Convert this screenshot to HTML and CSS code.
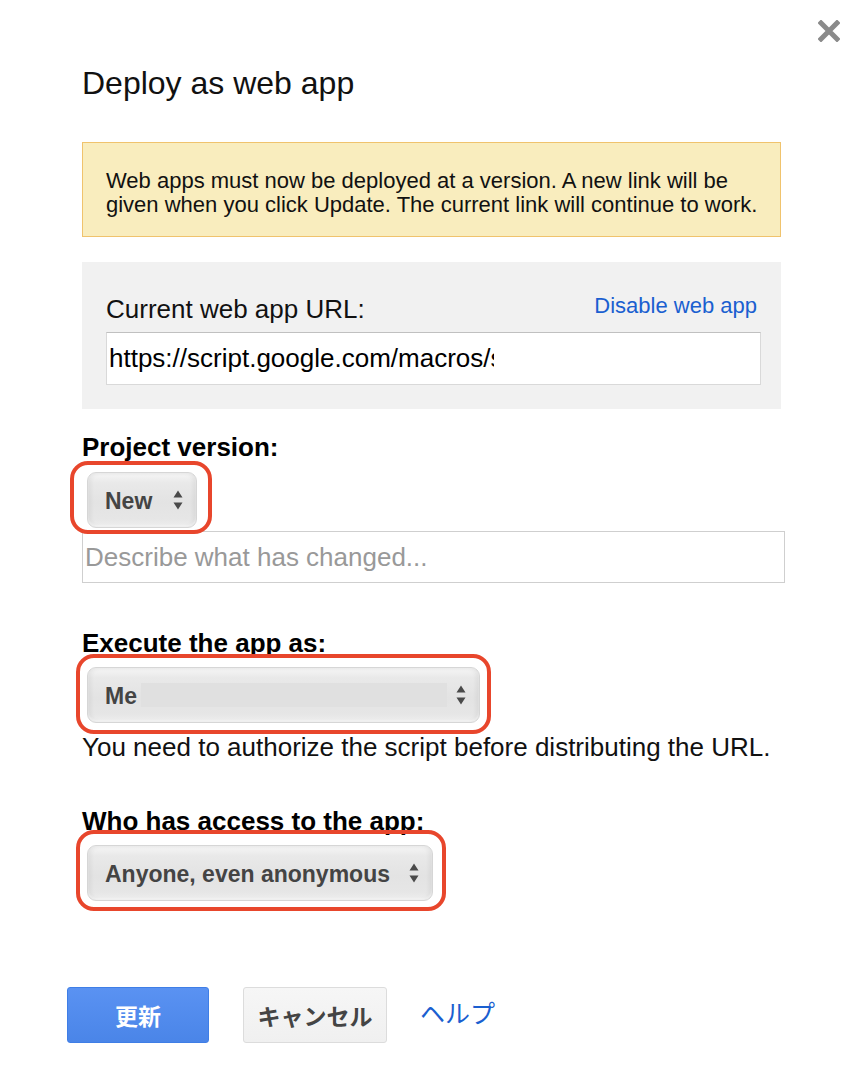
FILE: index.html
```html
<!DOCTYPE html>
<html lang="en">
<head>
<meta charset="utf-8">
<title>Deploy as web app</title>
<link rel="stylesheet" href="styles.css">
</head>
<body>
<div class="dialog">
  <button class="close" aria-label="Close">
    <svg width="22" height="22" viewBox="0 0 22 22"><path d="M3 3 L19 19 M19 3 L3 19" stroke="#8a8a8a" stroke-width="5" stroke-linecap="square" fill="none"/></svg>
  </button>

  <h1 class="title">Deploy as web app</h1>

  <div class="notice">Web apps must now be deployed at a version. A new link will be given when you click Update. The current link will continue to work.</div>

  <div class="url-panel">
    <div class="url-head">
      <span class="url-label">Current web app URL:</span>
      <a class="disable-link" href="#">Disable web app</a>
    </div>
    <div class="url-field"><span class="url-clip">https://script.google.com/macros/s</span></div>
  </div>

  <div class="field-label label-version">Project version:</div>
  <div class="hl hl-version">
    <div class="select sel-new">
      <span class="sel-text">New</span>
      <svg class="arrows" width="10" height="22" viewBox="0 0 10 22"><path d="M5 1.5 L9.5 8.5 L0.5 8.5 Z M0.5 13.5 L9.5 13.5 L5 20.5 Z" fill="#4a4a4a"/></svg>
    </div>
  </div>
  <input class="describe" type="text" placeholder="Describe what has changed...">

  <div class="field-label label-exec">Execute the app as:</div>
  <div class="hl hl-exec">
    <div class="select sel-me">
      <span class="sel-text">Me</span>
      <span class="redacted"></span>
      <svg class="arrows" width="10" height="22" viewBox="0 0 10 22"><path d="M5 1.5 L9.5 8.5 L0.5 8.5 Z M0.5 13.5 L9.5 13.5 L5 20.5 Z" fill="#4a4a4a"/></svg>
    </div>
  </div>
  <div class="note">You need to authorize the script before distributing the URL.</div>

  <div class="field-label label-access">Who has access to the app:</div>
  <div class="hl hl-access">
    <div class="select sel-anyone">
      <span class="sel-text">Anyone, even anonymous</span>
      <svg class="arrows" width="10" height="22" viewBox="0 0 10 22"><path d="M5 1.5 L9.5 8.5 L0.5 8.5 Z M0.5 13.5 L9.5 13.5 L5 20.5 Z" fill="#4a4a4a"/></svg>
    </div>
  </div>

  <div class="actions">
    <button class="btn btn-primary">更新</button>
    <button class="btn btn-cancel">キャンセル</button>
    <a class="help" href="#">ヘルプ</a>
  </div>
</div>
</body>
</html>
```

FILE: styles.css
```css
* { box-sizing: border-box; }

html, body {
  margin: 0;
  padding: 0;
  background: #fff;
}

body {
  font-family: "Liberation Sans", Arial, "Noto Sans CJK JP", sans-serif;
  color: #000;
}

.dialog {
  position: relative;
  width: 866px;
  min-height: 1078px;
  padding: 65px 81px 0 82px;
}

.close {
  position: absolute;
  top: 20px;
  left: 818px;
  width: 22px;
  height: 22px;
  padding: 0;
  border: 0;
  background: none;
  cursor: pointer;
  filter: blur(0.4px);
}
.close svg { display: block; }

.title {
  margin: 0;
  font-size: 32px;
  font-weight: normal;
  line-height: 36px;
  color: #111;
}

.notice {
  margin-top: 41px;
  width: 699px;
  height: 95px;
  padding: 26px 12px 0 23px;
  background: #f9edbe;
  border: 1px solid #f0c36d;
  font-size: 22px;
  line-height: 24px;
  color: #111;
}

.url-panel {
  margin-top: 25px;
  width: 699px;
  padding: 32px 20px 24px 24px;
  background: #f1f1f1;
}

.url-head {
  display: flex;
  justify-content: space-between;
  align-items: flex-start;
}

.url-label {
  font-size: 26px;
  line-height: 30px;
  color: #111;
}

.disable-link {
  margin-right: 4px;
  font-size: 22px;
  line-height: 24px;
  color: #1a5fd0;
  text-decoration: none;
}

.url-field {
  margin-top: 8px;
  height: 53px;
  padding: 0 2px;
  background: #fff;
  border: 1px solid #d9d9d9;
  border-top-color: #c0c0c0;
  font-size: 26px;
  line-height: 51px;
  color: #000;
  white-space: nowrap;
  overflow: hidden;
}
.url-clip {
  display: inline-block;
  width: 385px;
  overflow: hidden;
  vertical-align: top;
}

.field-label {
  font-size: 26px;
  line-height: 30px;
  font-weight: bold;
}
.label-version { margin-top: 23px; }
.label-exec { margin-top: 45px; }
.label-access { margin-top: 44px; }

.hl {
  position: relative;
  width: fit-content;
  margin-left: 5px;
  margin-top: 10px;
}
.hl::after {
  content: "";
  position: absolute;
  border: 4px solid #e8462c;
  border-radius: 18px;
  pointer-events: none;
}
.hl-version::after { top: -11px; left: -17px; right: -15px; bottom: -6px; }
.hl-exec { margin-top: 9px; }
.hl-exec::after { top: -13px; left: -11px; right: -11px; bottom: -11px; }
.hl-access { margin-top: 9px; }
.hl-access::after { top: -15px; left: -11px; right: -13px; bottom: -10px; }

.select {
  display: flex;
  align-items: center;
  height: 56px;
  padding: 3px 13px 0 17px;
  border: 1px solid #d6d6d6;
  border-radius: 9px;
  background: linear-gradient(to bottom, #f6f6f6 0%, #e9e9e9 18%, #e3e3e3 55%, #e6e6e6 85%, #eeeeee 100%);
  box-shadow: inset 3px 0 4px rgba(0,0,0,0.05), inset -3px 0 4px rgba(0,0,0,0.05), inset 0 -2px 2px rgba(255,255,255,0.7);
}
.sel-text {
  font-size: 23px;
  font-weight: bold;
  color: #444;
  white-space: nowrap;
}
.arrows { display: block; margin-left: auto; margin-top: -3px; flex: none; }

.sel-new { width: 110px; }
.sel-me { width: 393px; }
.sel-anyone { width: 346px; }

.redacted {
  display: block;
  width: 306px;
  height: 24px;
  margin-left: 4px;
  margin-top: -3px;
  background: #e0e0e0;
}

.describe {
  display: block;
  margin: 3px 0 0;
  width: 703px;
  height: 52px;
  padding: 0 2px;
  border: 1px solid #cfcfcf;
  border-radius: 0;
  font-family: inherit;
  font-size: 26px;
  color: #000;
  background: #fff;
  outline: none;
}
.describe::placeholder { color: #999; }

.note {
  margin-top: 9px;
  font-size: 26px;
  line-height: 30px;
  color: #111;
}

.actions {
  display: flex;
  align-items: center;
  margin-top: 86px;
  margin-left: -15px;
}

.btn {
  height: 56px;
  border-radius: 3px;
  font-family: "Liberation Sans", "Noto Sans CJK JP", sans-serif;
  font-size: 23px;
  font-weight: bold;
  padding: 0;
  cursor: pointer;
}
.btn-primary {
  width: 142px;
  color: #fff;
  background: linear-gradient(to bottom, #5a92f2, #4a85e8);
  border: 1px solid #3f7ee6;
}
.btn-cancel {
  width: 144px;
  margin-left: 34px;
  color: #444;
  background: linear-gradient(to bottom, #f6f6f6, #f0f0f0);
  border: 1px solid #dcdcdc;
}

.help {
  margin-left: 33px;
  margin-top: -6px;
  font-family: "Noto Sans CJK JP", sans-serif;
  font-size: 25px;
  color: #1a5fd0;
  text-decoration: none;
}
```
